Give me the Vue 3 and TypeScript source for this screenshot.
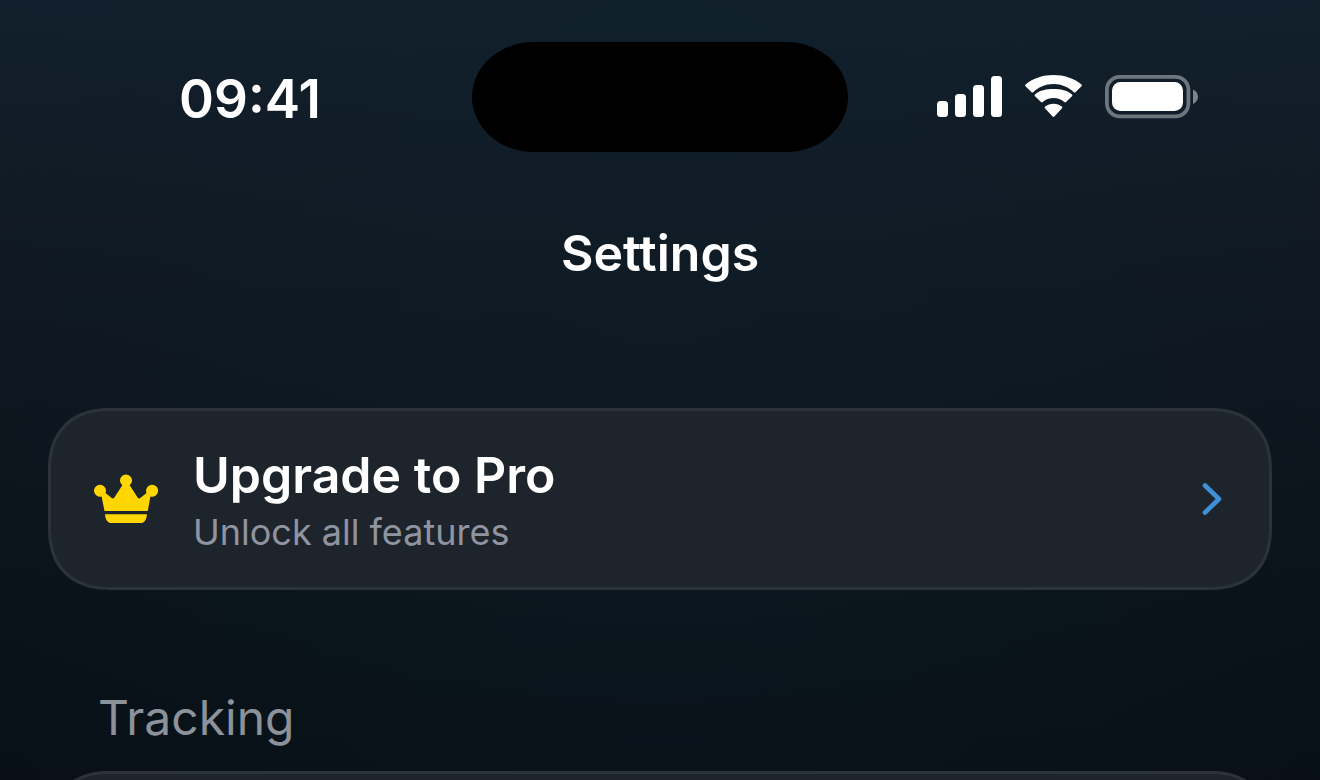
<script setup lang="ts">
interface Promo {
  title: string
  subtitle: string
}

const time = '09:41'
const pageTitle = 'Settings'
const promo: Promo = { title: 'Upgrade to Pro', subtitle: 'Unlock all features' }
const sectionTitle = 'Tracking'
</script>

<template>
  <div class="screen">
    <header class="status">
      <time class="clock">{{ time }}</time>
      <div class="island"></div>
      <div class="indicators">
        <svg class="signal" width="66" height="43" viewBox="0 0 66 43" fill="#fff" aria-hidden="true">
          <rect x="0" y="25" width="11" height="16" rx="3.500" />
          <rect x="18" y="18" width="11" height="23" rx="3.500" />
          <rect x="36" y="9" width="11" height="32" rx="3.500" />
          <rect x="54" y="0" width="11" height="41" rx="3.500" />
        </svg>
        <svg class="wifi" width="58" height="45" viewBox="0 0 58 45" fill="#fff" aria-hidden="true">
          <path d="M28.500 9c7.800 0 14.900 3 20.300 8.200.5.500 1.100.5 1.600 0l6.100-6c.5-.5.5-1.200 0-1.700C48.900 3.200 39 0 28.500 0S8.100 3.200.5 9.500c-.5.5-.5 1.200 0 1.700l6.100 6c.5.5 1.100.5 1.600 0C13.600 12 20.700 9 28.500 9z" />
          <path d="M28.500 23c4.100 0 7.900 1.500 10.800 4.100.5.5 1.200.5 1.700 0l6-5.900c.5-.5.5-1.200 0-1.700-4.700-4.300-11.700-5.500-18.500-5.500s-13.800 1.200-18.500 5.500c-.5.5-.5 1.200 0 1.700l6 5.900c.5.5 1.200.5 1.700 0 2.900-2.600 6.700-4.100 10.800-4.100z" />
          <path d="M37 33.300c.5-.5.5-1.200-.1-1.700-2.300-1.900-5.200-2.900-8.400-2.900s-6.100 1-8.400 2.900c-.6.5-.6 1.200-.1 1.700l7.600 8.200c.5.5 1.300.5 1.800 0z" />
        </svg>
        <svg class="battery" width="94" height="45" viewBox="0 0 94 45" fill="none" aria-hidden="true">
          <rect x="1.900" y="1.900" width="81.500" height="39.500" rx="13" stroke="#6d757d" stroke-width="3.800" />
          <rect x="7" y="7" width="71" height="29" rx="8.500" fill="#fff" />
          <path d="M88 14.500c3 1.200 5 4 5 7.200s-2 6-5 7.200z" fill="#7c838b" />
        </svg>
      </div>
    </header>

    <h1 class="title">{{ pageTitle }}</h1>

    <main class="content">
      <button class="card promo" type="button">
        <svg class="crown" width="64" height="50" viewBox="0 0 64 50" fill="#ffd600" aria-hidden="true">
          <path d="M10.500 37 7.600 22.500A6 6 0 1 1 12 16.600c0 .9-.2 1.600-.5 2.300l6.200 5.100c.9.700 2.100.6 2.700-.4L28.300 11.200A6 6 0 1 1 35.700 11.200L43.600 23.600c.6 1 1.800 1.100 2.700.4l6.200-5.100A6 6 0 1 1 56.400 22.500L53.700 37z" />
          <path d="M11 40.200H53c-.5 5.400-2.600 8.800-6.700 8.800H17.700c-4.100 0-6.200-3.400-6.700-8.800z" />
        </svg>
        <span class="copy">
          <span class="promo-title">{{ promo.title }}</span>
          <span class="promo-subtitle">{{ promo.subtitle }}</span>
        </span>
        <svg class="chevron" width="20" height="34" viewBox="0 0 20 34" fill="none" aria-hidden="true">
          <path d="M3 3.500 17 17 3 30.500" stroke="#4090d8" stroke-width="4.600" stroke-linecap="round" stroke-linejoin="round" />
        </svg>
      </button>

      <section class="section">
        <h2 class="section-title">{{ sectionTitle }}</h2>
        <div class="card"></div>
      </section>
    </main>
  </div>
</template>

<style>
body {
  margin: 0;
  background: #080d14;
}
</style>

<style scoped>
.screen {
  box-sizing: border-box;
  height: 100vh;
  overflow: hidden;
  padding-top: 42px;
  color: #fff;
  font-family: Inter, "Liberation Sans", sans-serif;
  background:
    radial-gradient(ellipse 60% 130% at 50% 40%, rgba(12, 36, 46, 0.28), rgba(12, 36, 46, 0) 100%),
    linear-gradient(180deg, #11202c 0%, #111a25 24%, #0e161e 50%, #0a1219 78%, #090f16 100%);
}

.status {
  display: grid;
  grid-template-columns: 1fr 376px 1fr;
  align-items: center;
}

.clock {
  padding: 3px 0 0 28px;
  text-align: center;
  font-size: 53px;
  line-height: 64px;
  font-weight: 600;
}

.island {
  height: 110px;
  border-radius: 62px / 55px;
  background: #000;
}

.indicators {
  display: flex;
  justify-content: center;
  align-items: center;
  gap: 22px;
  padding-right: 32px;
}

.title {
  margin: 70px 0 0;
  text-align: center;
  font-size: 50px;
  line-height: 62px;
  font-weight: 600;
}

.content {
  padding: 124px 48px 0;
}

.card {
  box-sizing: border-box;
  width: 100%;
  min-height: 182px;
  border: 3px solid #2c3239;
  border-radius: 62px;
  corner-shape: superellipse(1.2);
  background: #1e242b;
}

.promo {
  display: flex;
  align-items: center;
  gap: 35px;
  padding: 0 47px 0 43px;
  color: inherit;
  font: inherit;
  text-align: left;
}

.copy {
  display: flex;
  flex: 1;
  flex-direction: column;
  padding-top: 2px;
}

.promo-title {
  font-size: 50px;
  line-height: 64px;
  font-weight: 600;
}

.promo-subtitle {
  color: #9094a0;
  font-size: 36px;
  line-height: 50px;
}

.section {
  padding-top: 97px;
}

.section-title {
  margin: 0 0 22px;
  padding-left: 50px;
  color: #8c929b;
  font-size: 48px;
  line-height: 62px;
  font-weight: 400;
}
</style>
